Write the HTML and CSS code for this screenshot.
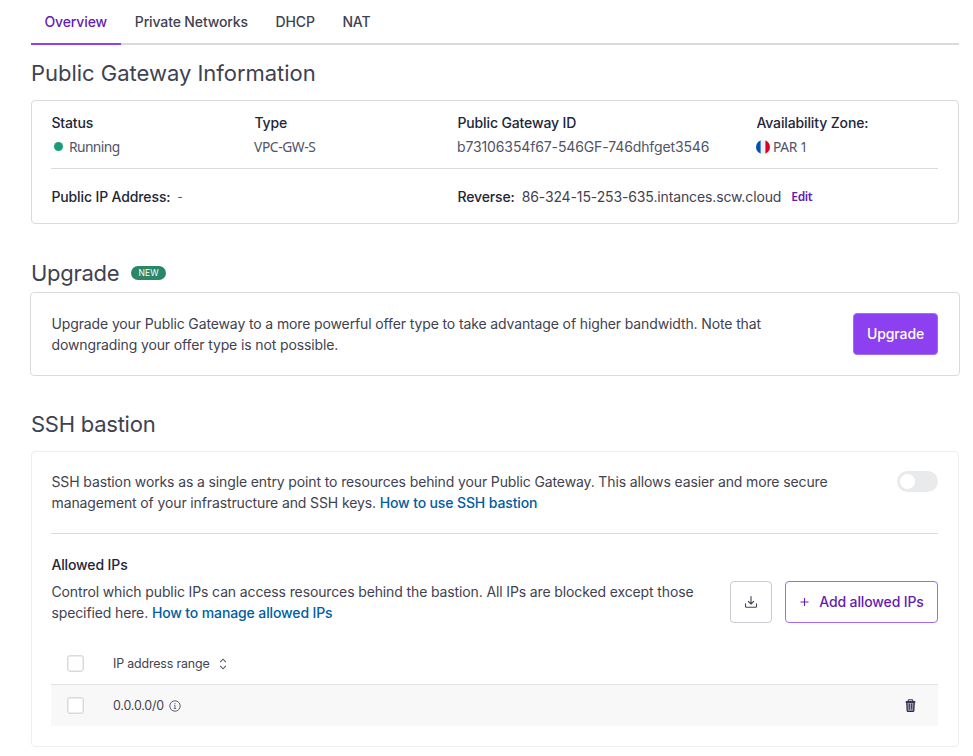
FILE: index.html
```
<!DOCTYPE html>
<html lang="en">
<head>
<meta charset="utf-8">
<title>Public Gateway</title>
<link rel="stylesheet" href="styles.css">
</head>
<body>
<main class="page">
  <nav class="tabs">
    <a class="tab active">Overview</a>
    <a class="tab">Private Networks</a>
    <a class="tab">DHCP</a>
    <a class="tab">NAT</a>
  </nav>

  <h2 class="title title-info">Public Gateway Information</h2>
  <section class="card info">
    <div class="info-grid info-top">
      <div><div class="label">Status</div><div class="value humanist running"><i class="dot"></i>Running</div></div>
      <div><div class="label">Type</div><div class="value humanist">VPC-GW-S</div></div>
      <div><div class="label">Public Gateway ID</div><div class="value gateway-id">b73106354f67-546GF-746dhfget3546</div></div>
      <div><div class="label zone">Availability Zone:</div><div class="value humanist flagged">
        <svg class="flag" viewBox="0 0 14 14"><clipPath id="round"><circle cx="7" cy="7" r="7"/></clipPath><g clip-path="url(#round)"><path fill="#f0f0f0" d="M0 0h14v14H0z"/><path fill="#0052b4" d="M0 0h4.6v14H0z"/><path fill="#d80027" d="M9.4 0H14v14H9.4z"/></g></svg>PAR 1</div></div>
    </div>
    <div class="info-grid info-bottom">
      <div class="pair ip"><span class="label">Public IP Address:</span><span class="dash">-</span></div>
      <div class="pair reverse"><span class="label">Reverse:</span><span class="host">86-324-15-253-635.intances.scw.cloud</span><a class="edit">Edit</a></div>
    </div>
  </section>

  <h2 class="title title-upgrade">Upgrade <span class="badge">NEW</span></h2>
  <section class="card upgrade">
    <p class="copy">Upgrade your Public Gateway to a more powerful offer type to take advantage of higher bandwidth. Note that<br>downgrading your offer type is not possible.</p>
    <button class="btn primary">Upgrade</button>
  </section>

  <h2 class="title title-ssh">SSH bastion</h2>
  <section class="card ssh">
    <div class="intro">
      <p class="copy">SSH bastion works as a single entry point to resources behind your Public Gateway. This allows easier and more secure<br>management of your infrastructure and SSH keys. <a class="link">How to use SSH bastion</a></p>
      <span class="toggle"></span>
    </div>
    <div class="allowed">
      <div>
        <h3 class="label">Allowed IPs</h3>
        <p class="copy">Control which public IPs can access resources behind the bastion. All IPs are blocked except those<br>specified here. <a class="link">How to manage allowed IPs</a></p>
      </div>
      <div class="actions">
        <button class="btn download" aria-label="Download"><svg width="14" height="14" viewBox="0 0 14 14" fill="none" stroke="#3f4250" stroke-width="1.1" stroke-linecap="round" stroke-linejoin="round"><path d="M7 1.5v7.2M4.3 6.3 7 9l2.7-2.7M1.5 8.8v2.4q0 1 1 1h9q1 0 1-1V8.8"/></svg></button>
        <button class="btn add"><svg width="10" height="10" viewBox="0 0 10 10" stroke="#641cb3" stroke-width="1.1"><path d="M5.5 1v8M1.5 5h8"/></svg>Add allowed IPs</button>
      </div>
    </div>
    <div class="table">
      <div class="row head">
        <span class="check"></span><span class="cell range">IP address range</span>
        <svg class="sort" width="8" height="12" viewBox="0 0 8 12" fill="none" stroke="#5c5f70" stroke-width="1.1"><path d="M1.2 4 4 1.2 6.8 4M1.2 8 4 10.8 6.8 8"/></svg>
      </div>
      <div class="row item">
        <span class="check"></span><span class="cell">0.0.0.0/0</span>
        <svg class="hint" width="12" height="12" viewBox="0 0 12 12" fill="none" stroke="#5c5f70"><circle cx="6" cy="6" r="5.2"/><path d="M5 5.3h1v3M4.8 8.5h2.4M6 3v1.1" stroke-width=".9"/></svg>
        <svg class="trash" width="11" height="13" viewBox="0 0 11 13" fill="none"><path d="M1.8 3h7.4l-.4 8.4q0 1-1 1H3.2q-1 0-1-1z" fill="#a3a5b5" stroke="#2b2d45" stroke-width="1.3"/><path d="M.6 2.9h9.8" stroke="#2b2d45" stroke-width="1.3"/><path d="M3.3 2.5V.8h4.4v1.7M4.3 4.7v5.8M6.7 4.7v5.8" stroke="#2b2d45" stroke-width="1"/></svg>
      </div>
    </div>
  </section>
</main>
</body>
</html>
```

FILE: styles.css
```
* { box-sizing: border-box; }
body { margin: 0; background: #fff; color: #3f4250; font: 14px/20.5px Inter, "Liberation Sans", sans-serif; letter-spacing: -.125px; }
h2, h3, p { margin: 0; }
svg { display: block; flex: none; }
.page { width: 928px; margin-left: 31px; }

.tabs { display: flex; height: 45px; border-bottom: 2px solid #d9dadd; }
.tab { height: 45px; padding: 0 13.8px; line-height: 43px; font-weight: 500; letter-spacing: -.13px; border-bottom: 2px solid transparent; }
.tab.active { width: 90px; padding-left: 13.5px; color: #641cb3; border-color: #8c40ef; }

.title { display: flex; align-items: center; height: 28px; font-size: 22px; font-weight: 400; line-height: 28px; letter-spacing: -.02px; }
.title-info { margin-top: 14px; }
.title-upgrade { margin-top: 35px; letter-spacing: -.3px; }
.title-ssh { margin-top: 34px; letter-spacing: -.25px; }
.badge { margin-left: 12px; width: 35px; height: 14px; border-radius: 7px; background: #2c8767; color: #fff; font-size: 8.5px; font-weight: 400; line-height: 14px; letter-spacing: .1px; text-align: center; }

.card { border: 1px solid #d9dadd; border-radius: 4px; background: #fff; }
.label { color: #222638; font-size: 14px; font-weight: 500; text-indent: .4px; }
.info { height: 124px; margin-top: 13px; padding: 12px 20px 0 19px; }
.info-grid { display: grid; grid-template-columns: 203px 203px 299px 1fr; }
.info-top { height: 56px; border-bottom: 1px solid #d9dadd; }
.value { margin-top: 3px; }
.humanist { display: flex; align-items: center; color: #515467; font-family: "Noto Sans", "Open Sans", sans-serif; font-size: 13.8px; letter-spacing: -.4px; }
.running { letter-spacing: -.6px; }
.dot { width: 9px; height: 9px; margin: 0 6px 0 3px; border-radius: 50%; background: #1a9b7b; }
.gateway-id { color: #515467; }
.flag { width: 14px; height: 14px; margin-right: 3px; }
.info-bottom { height: 56px; align-items: center; }
.pair { display: flex; align-items: center; white-space: nowrap; }
.ip { grid-column: 1 / 3; }
.reverse { grid-column: 3 / 5; }
.dash { margin-left: 7px; font-size: 11px; }
.host { margin-left: 7px; }
.edit { margin-left: 10px; color: #641cb3; font: 600 12px/20px "Noto Sans", sans-serif; letter-spacing: -.35px; }

.upgrade { display: flex; justify-content: space-between; width: 930px; height: 84px; margin: 5px 0 0 -1px; padding: 20px 21px 0 20px; }
.copy { padding-left: .5px; white-space: nowrap; }
.upgrade .copy { padding-top: 1px; }
.btn { display: flex; align-items: center; justify-content: center; height: 42px; padding: 0; border-radius: 4px; font: 500 14px/20px Inter, sans-serif; background: #fff; }
.primary { width: 85px; border: 1px solid #a56af3; background: #8c40ef; color: #fff; letter-spacing: -.1px; }
.link { color: #005da1; font-weight: 500; }

.ssh { height: 296px; margin-top: 13px; padding: 20px 20px 0 19px; border-color: #eeeeef; }
.intro { display: flex; justify-content: space-between; height: 62px; border-bottom: 1px solid #d9dadd; }
.toggle { width: 41px; height: 21px; margin-top: -1px; padding: 3px; border-radius: 11px; background: #e9eaeb; }
.toggle::before { content: ""; display: block; width: 15px; height: 15px; border-radius: 50%; background: #fff; }
.allowed { display: flex; justify-content: space-between; height: 110px; padding-top: 21px; }
.allowed .label { margin-bottom: 6.5px; }
.actions { display: flex; gap: 13px; padding-top: 26px; }
.download { width: 42px; border: 1px solid #c9cad0; }
.add { width: 153px; gap: 10px; border: 1px solid #a56af3; color: #641cb3; letter-spacing: -.13px; }
.row { display: flex; align-items: center; height: 41px; padding-left: 16px; }
.head { border-bottom: 1px solid #e1e2e5; }
.item { background: #f8f8f8; }
.check { width: 17px; height: 17px; margin: -1px 29px 0 0; border: 1px solid #d9dadd; box-shadow: inset 0 0 0 .5px #d9dadd; border-radius: 3px; background: #fff; }
.cell { font-size: 12.4px; letter-spacing: -.15px; }
.item .cell { padding-top: 1px; }
.sort { margin-left: 10px; }
.hint { margin-left: 5px; }
.trash { margin: 0 22px 0 auto; }
```
